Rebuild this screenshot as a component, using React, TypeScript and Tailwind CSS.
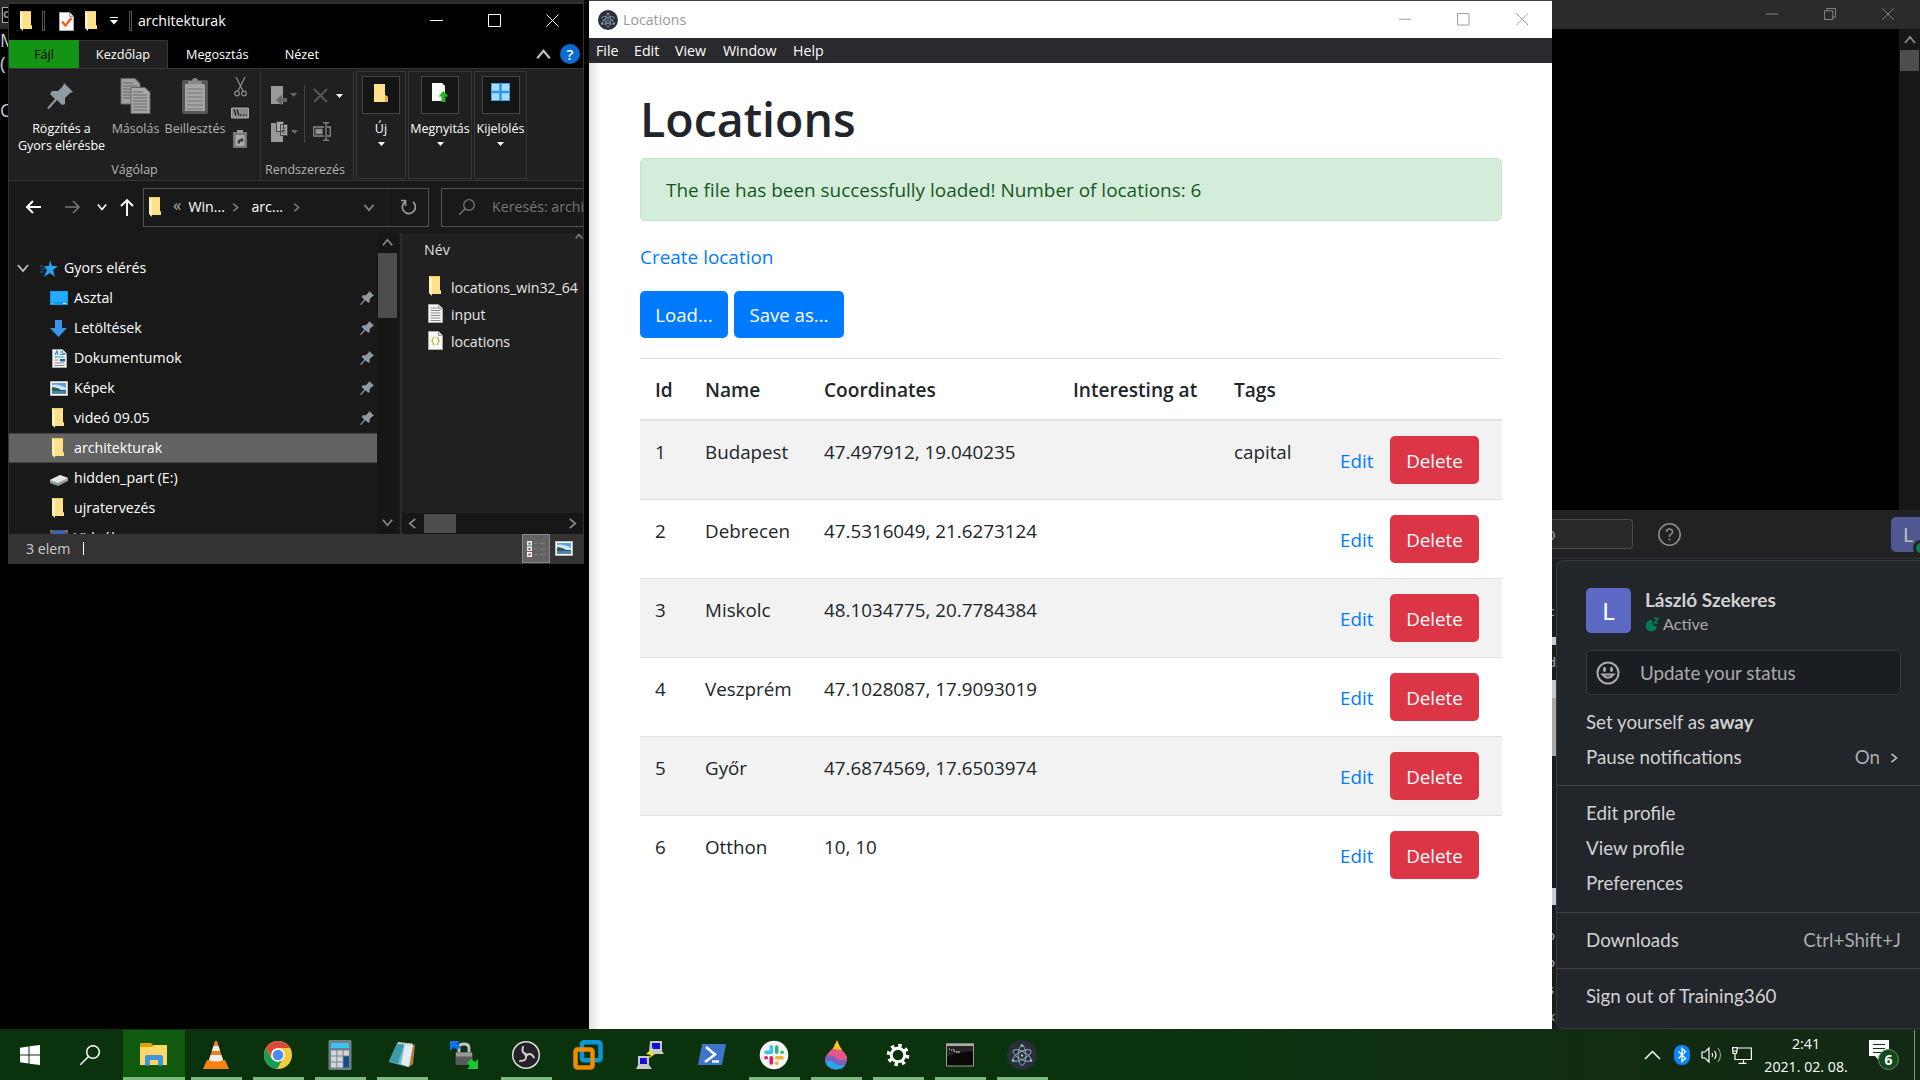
import React from 'react';

type Kids = { children?: React.ReactNode };

function Folder({ className = 'w-[14px] h-5' }: { className?: string }) {
  return (
    <svg className={className + ' shrink-0'} viewBox="0 0 14 20">
      <path d="M1 0h11v14l1 1v3H3L1 17z" fill="#f5c95f" />
      <path d="M4 1h8v13l1 1v3H4z" fill="#ffe08a" />
      <path d="M1 0l3 2v18l-3-3z" fill="#fff0b8" />
    </svg>
  );
}

function Pin({ className = 'w-[14px] h-[14px]' }: { className?: string }) {
  return (
    <svg className={className + ' shrink-0'} viewBox="0 0 26 26" fill="#8f9ba3">
      <path d="M17 0l9 9-3 1-5 5v6l-3 1-5-5-8 9-2-1 8-9-5-5 2-3h6l5-5z" />
    </svg>
  );
}

function Doc({ kind }: { kind: 'text' | 'json' | 'rich' | 'check' }) {
  return (
    <svg className="w-[15px] h-[19px] shrink-0" viewBox="0 0 15 19">
      <path d="M.5.5h10l4 4v14H.5z" fill="#f8f8f8" stroke="#aaa" />
      <path d="M10.5.5v4h4" fill="#ddd" stroke="#999" />
      {kind === 'text' && <path d="M2.5 4h7M2.5 6.5h10M2.5 9h10M2.5 11.500h10M2.500 14h10M2.500 16.500h10" stroke="#888" />}
      {kind === 'json' && <path d="M6.500 6q-1.500 0-1.500 1.500t-1.200 2.200q1.200.6 1.200 2.200t1.500 1.600M8.500 6q1.500 0 1.500 1.500t1.200 2.200q-1.200.6-1.200 2.200t-1.500 1.600" fill="none" stroke="#c0b52e" strokeWidth="1.200" />}
      {kind === 'rich' && (
        <>
          <path d="M3 6l2-4 1 4M8 3h3M8 5.500h5M2.500 8h10" stroke="#1e90dd" strokeWidth="1.200" fill="none" />
          <path d="M2.500 11h4M2.500 14h10M2.500 16.500h10" stroke="#888" />
          <path d="M8 10h5v2.500H8z" fill="#2c5f8c" />
        </>
      )}
      {kind === 'check' && <path d="M3 9.500l3.500 4L12.500 6" fill="none" stroke="#ef5a1a" strokeWidth="2.200" />}
    </svg>
  );
}

function Picture() {
  return (
    <svg className="w-[18px] h-[15px] shrink-0" viewBox="0 0 18 15">
      <path d="M.5.5h17v14H.5z" fill="#fff" stroke="#bbb" />
      <path d="M2 2h14v11H2z" fill="#5d9fe0" />
      <path d="M2 4q5-2 14 3v2H2z" fill="#cfe6f7" />
      <path d="M2 6q7 1 9 3h5v2H2z" fill="#2f5c50" />
      <path d="M2 10h14v3H2z" fill="#4a86b0" />
    </svg>
  );
}

function Drive() {
  return (
    <svg className="w-[18px] h-[12px] shrink-0" viewBox="0 0 18 12">
      <path d="M0 6l10-5 8 3v3l-10 5-8-3z" fill="#9a9a9a" />
      <path d="M0 6l10-5 8 3-10 5z" fill="#e6e6e6" />
      <path d="M5 9.500l2 .6" stroke="#2fd03a" strokeWidth="1.500" />
    </svg>
  );
}

function Chevron({ dir, className }: { dir: 'up' | 'down' | 'left' | 'right'; className: string }) {
  const d = { up: 'M1 9l5-6 5 6', down: 'M1 3l5 6 5-6', left: 'M9 1L3 6l6 5', right: 'M3 1l6 5-6 5' }[dir];
  return (
    <svg className={className + ' shrink-0'} viewBox="0 0 12 12" fill="none" stroke="currentColor" strokeWidth="1.900">
      <path d={d} />
    </svg>
  );
}

function Triangle({ className = 'text-white' }: { className?: string }) {
  return (
    <svg className={className + ' h-1 w-[7px] shrink-0'} viewBox="0 0 7 4" fill="currentColor">
      <path d="M0 0h7L3.500 4z" />
    </svg>
  );
}

function WindowButtons({ className, restored = false, size = 13 }: { className: string; restored?: boolean; size?: number }) {
  const svg = { width: size, height: size };
  return (
    <div className={'flex items-center ' + className}>
      <svg {...svg} viewBox="0 0 13 13" stroke="currentColor" fill="none"><path d="M0 6.500h13" /></svg>
      <svg {...svg} viewBox="0 0 13 13" stroke="currentColor" fill="none">
        {restored ? <path d="M.5 3h9v9.500h-9zM3 3V.5h9.500V10H9.500" /> : <path d="M.5.5h12v12H.5z" />}
      </svg>
      <svg {...svg} viewBox="0 0 13 13" stroke="currentColor" fill="none"><path d="M.5.5l12 12M12.500.5l-12 12" /></svg>
    </div>
  );
}

function Electron({ className }: { className: string }) {
  return (
    <svg className={className + ' shrink-0'} viewBox="0 0 30 30">
      <circle cx="15" cy="15" r="15" fill="#2b2e3b" />
      <g fill="none" stroke="#8fb6bf" strokeWidth=".9">
        <ellipse cx="15" cy="15.500" rx="10" ry="3.800" transform="rotate(28 15 15.500)" />
        <ellipse cx="15" cy="15.500" rx="10" ry="3.800" transform="rotate(-28 15 15.500)" />
        <ellipse cx="15" cy="15.500" rx="3.800" ry="10" />
      </g>
      <g fill="#9fc6cf"><circle cx="15" cy="15.500" r="1.200" /><circle cx="15" cy="5.500" r="1.300" /><circle cx="6" cy="20.500" r="1.300" /><circle cx="24" cy="20.500" r="1.300" /></g>
    </svg>
  );
}

function CommandWindow() {
  return (
    <section className="absolute inset-x-0 top-0 h-[510px] bg-black text-[#ccc] font-['Open_Sans',sans-serif]">
      <header className="flex h-[29px] items-center justify-between bg-[#2b2b2b] pl-[2px] pr-[26px] text-[#8c8c8c]">
        <span className="h-4 w-5 border border-[#aaa] bg-black text-[12px] font-bold leading-3">c:\</span>
        <WindowButtons className="gap-[46px] -mt-[2px]" restored size={12} />
      </header>
      <div className="flex h-[481px] justify-between">
        <div className="flex w-[9px] flex-col overflow-hidden text-[18px] leading-[23px]">
          <span>M</span>
          <span className="text-[19px]">(</span>
          <span className="mt-6">C</span>
        </div>
        <div className="flex w-[21px] flex-col items-center bg-[#171717]">
          <Chevron dir="up" className="mt-[5px] h-3 w-3 text-[#8a8a8a]" />
          <i className="mt-1 h-[21px] w-[19px] bg-[#4d4d4d]" />
        </div>
      </div>
    </section>
  );
}

function SideRow({ icon, label, pinned, active }: { icon: React.ReactNode; label: string; pinned?: boolean; active?: boolean }) {
  return (
    <div className={'flex h-[30px] shrink-0 items-center pl-[41px] pr-[3px] ' + (active ? 'border-y border-[#444] bg-[#626262]' : '')}>
      <span className="flex w-[24px] items-center">{icon}</span>
      <span className="flex-1">{label}</span>
      {pinned && <Pin />}
    </div>
  );
}

function RibbonMenu({ label, width, children }: Kids & { label: string; width: string }) {
  return (
    <div className={width + ' flex h-[108px] flex-col items-center border border-[#363636] pt-[4px]'}>
      <span className="flex h-[38px] w-[38px] justify-center border border-[#454545] bg-[#151515] pt-[6px]">{children}</span>
      <span className="mt-[6px] leading-[17px]">{label}</span>
      <Triangle className="mt-[5px] text-white" />
    </div>
  );
}

function Ribbon() {
  return (
    <div className="flex h-[113px] border-y border-[#363636] bg-[#202020] pt-[2px] text-[12.500px] whitespace-nowrap">
      <div className="flex w-[252px] flex-col border-r border-[#363636]">
        <div className="flex h-[92px]">
          <div className="flex w-[97px] flex-col items-center pl-[8px] pt-[12px] text-center">
            <Pin className="mr-1 h-[26px] w-[26px]" />
            <span className="mt-[11px] leading-[17px]">Rögzítés a<br />Gyors elérésbe</span>
          </div>
          <div className="ml-[3px] flex w-[53px] flex-col items-center pt-[7px] text-[#b3b3b3]">
            <svg className="h-[36px] w-[31px]" viewBox="0 0 31 36" stroke="#666">
              <path d="M1 .5h14l5 5V26H1z" fill="#a0a0a0" />
              <path d="M3 5h10M3 8h14M3 11h14M3 14h14M3 17h14M3 20h14" />
              <path d="M11 9.500h14l5 5v21H11z" fill="#a8a8a8" />
              <path d="M13 14h10M13 17h14M13 20h14M13 23h14M13 26h14M13 29h14M13 32h14" />
            </svg>
            <span className="mt-[6px] leading-[17px]">Másolás</span>
          </div>
          <div className="flex w-[65px] flex-col items-center pl-px pt-[7px] text-[#b3b3b3]">
            <svg className="h-[36px] w-[26px]" viewBox="0 0 26 36">
              <rect y="2" width="26" height="34" rx="2" fill="#555" />
              <path d="M3 6h20v27H3z" fill="#a5a5a5" />
              <path d="M6 6V3h4q0-3 3-3t3 3h4v3z" fill="#888" />
              <path d="M5 11h16M5 15h16M5 19h16M5 23h16M5 27h16M5 31h16" stroke="#777" />
            </svg>
            <span className="mt-[6px] leading-[17px]">Beillesztés</span>
          </div>
          <div className="flex flex-1 flex-col items-center pr-[7px] pt-[6px]">
            <svg className="h-5 w-[13px]" viewBox="0 0 13 20" fill="none" stroke="#888" strokeWidth="1.300">
              <path d="M2 0l7 14M11 0L4 14" /><circle cx="3" cy="16.500" r="2.300" /><circle cx="10" cy="16.500" r="2.300" />
            </svg>
            <svg className="mt-[10px] h-[12px] w-[18px]" viewBox="0 0 18 11">
              <path d="M.5.5h17v10H.5z" fill="#8b8b8b" stroke="#aaa" /><path d="M3 2l2 6M6 2l2 6M9 7.500h1.500M12 7.500h1.500M15 7.500h1" stroke="#222" strokeWidth="1.300" />
            </svg>
            <svg className="mt-[11px] h-[18px] w-[14px]" viewBox="0 0 14 18">
              <path d="M0 2h14v16H0z" fill="#777" /><path d="M4 0h6v3H4z" fill="#999" /><path d="M2.500 5h9v11h-9z" fill="#aaa" /><path d="M4.500 13q0-4 4-4V7l2 3-2 3v-2q-2 0-2 3z" fill="#333" />
            </svg>
          </div>
        </div>
        <span className="text-center text-[#b3b3b3]">Vágólap</span>
      </div>
      <div className="flex w-[93px] flex-col items-center border-r border-[#363636]">
        <div className="flex h-[92px] w-full pl-[10px] pt-[14px]">
          <div className="mb-[18px] flex w-[34px] flex-col gap-[16px] border-r border-[#444]">
            <div className="flex items-center gap-[3px]">
              <svg className="h-5 w-4" viewBox="0 0 16 20"><path d="M0 1h12v18H0z" fill="#999" /><path d="M16 13h-5V9.500L5 15l6 5.500V17h5z" fill="#666" /></svg>
              <Triangle className="text-[#666]" />
            </div>
            <div className="flex items-center gap-[3px]">
              <svg className="h-[21px] w-[17px]" viewBox="0 0 17 21"><path d="M0 2h12v19H0z" fill="#999" /><path d="M5.500.5h7v10h-7zM9.500 3.500h7v11h-7z" fill="#aaa" stroke="#444" /><path d="M11 7h4M11 9.500h4M11 12h4" stroke="#555" /></svg>
              <Triangle className="text-[#666]" />
            </div>
          </div>
          <div className="flex flex-col items-start gap-[19px] pl-[8px] pt-[3px]">
            <div className="flex items-center gap-[8px]">
              <svg className="h-[15px] w-[15px]" viewBox="0 0 15 15" stroke="#555" strokeWidth="2"><path d="M1 1l13 13M14 1L1 14" /></svg>
              <Triangle />
            </div>
            <svg className="h-[19px] w-[18px]" viewBox="0 0 18 19" fill="none" stroke="#888" strokeWidth="1.300">
              <path d="M11 5H.7v9H11M14 5h3.300v9H14M10 .7h2l1 1 1-1h2M10 18.300h2l1-1 1 1h2M13 1v17" /><path d="M3 7.500h6v4H3z" fill="#999" />
            </svg>
          </div>
        </div>
        <span className="pr-[4px] text-[#b3b3b3]">Rendszerezés</span>
      </div>
      <div className="flex gap-[2px] pl-[2px]">
        <RibbonMenu label="Új" width="w-[50px]">
          <svg className="h-[20px] w-[14px]" viewBox="0 0 14 18"><path d="M0 0h11v11l3 2v5H0z" fill="#ffe08a" /><path d="M11 11l3 2v5h-3z" fill="#e8b63f" /></svg>
        </RibbonMenu>
        <RibbonMenu label="Megnyitás" width="w-[64px]">
          <svg className="h-[19px] w-[16px]" viewBox="0 0 16 19"><path d="M0 0h10l3 3v15H0z" fill="#fafafa" /><path d="M11.500 8l5 5.500h-3V19h-4v-5.500h-3z" fill="#1fb825" /></svg>
        </RibbonMenu>
        <RibbonMenu label="Kijelölés" width="w-[53px]">
          <svg className="h-[18px] w-[19px]" viewBox="0 0 19 18"><path d="M.5.5h18v17H.5z" fill="#a5dcff" stroke="#3f9ff0" /><path d="M9.500 0v18M0 9h19" stroke="#3394ee" strokeWidth="2.500" /></svg>
        </RibbonMenu>
      </div>
    </div>
  );
}

function Explorer() {
  return (
    <section className="absolute left-[8px] top-[3px] flex h-[561px] w-[576px] flex-col overflow-hidden border border-[#333] bg-[#191919] font-['Open_Sans',sans-serif] text-[14.200px] text-white">
      <header className="flex h-[36px] shrink-0 items-center bg-black pb-[2px] pl-[10px] pr-[24px]">
        <Folder />
        <i className="ml-[9px] h-5 w-[3px] border border-[#555]" />
        <span className="ml-[14px] flex"><Doc kind="check" /></span>
        <span className="ml-[10px] flex"><Folder /></span>
        <svg className="ml-[12px] h-2 w-2" viewBox="0 0 8 8" fill="#fff"><path d="M0 0h8v1H0zM0 3h8L4 7.500z" /></svg>
        <i className="ml-[11px] h-5 w-[3px] border border-[#555]" />
        <span className="ml-[6px] flex-1 tracking-[-0.04px]">architekturak</span>
        <WindowButtons className="gap-[45px] -mt-[1px]" size={13} />
      </header>
      <nav className="flex h-[28px] shrink-0 items-stretch bg-black text-[12.700px] leading-[29px]">
        <span className="w-[70px] bg-[#149414] text-center text-black">Fájl</span>
        <span className="w-[89px] border-r border-t border-[#363636] bg-[#202020] text-center leading-[27px]">Kezdőlap</span>
        <span className="ml-[18px]">Megosztás</span>
        <span className="ml-[36px] flex-1">Nézet</span>
        <Chevron dir="up" className="mr-[9px] mt-[7px] h-[15px] w-[15px] text-[#bbb]" />
        <span className="mr-[3px] mt-[4px] h-5 w-5 rounded-full bg-[#0a6bd0] text-center text-[15px] font-semibold leading-5">?</span>
      </nav>
      <Ribbon />
      <div className="flex h-[52px] shrink-0 items-center">
        <svg className="ml-[16px] h-4 w-[17px] shrink-0" viewBox="0 0 17 16" fill="none" stroke="#fff" strokeWidth="2"><path d="M16 8H2M8 2L2 8l6 6" /></svg>
        <svg className="ml-[22px] h-4 w-[17px] shrink-0" viewBox="0 0 17 16" fill="none" stroke="#777" strokeWidth="1.600"><path d="M1 8h14M9 2l6 6-6 6" /></svg>
        <Chevron dir="down" className="ml-[16px] h-[10px] w-[10px]" />
        <svg className="ml-[13px] h-[18px] w-[14px] shrink-0" viewBox="0 0 14 18" fill="none" stroke="#fff" strokeWidth="1.900"><path d="M7 18V2M1 8l6-6 6 6" /></svg>
        <div className="ml-[9px] flex h-[39px] w-[286px] shrink-0 items-center border border-[#535353] pl-[4px]">
          <Folder />
          <span className="-mt-1 ml-[11px] text-[17px] text-[#aaa]">«</span>
          <span className="ml-[7px] w-[36px]">Win...</span>
          <Chevron dir="right" className="ml-[7px] h-[9px] w-[9px] text-[#888]" />
          <span className="ml-[11px] w-[29px]">arc...</span>
          <Chevron dir="right" className="ml-[12px] h-[9px] w-[9px] text-[#888]" />
          <span className="flex-1" />
          <Chevron dir="down" className="h-[11px] w-[12px] text-[#888]" />
          <i className="ml-[12px] h-full w-px bg-[#222]" />
          <svg className="mx-[12px] h-4 w-4" viewBox="0 0 16 16" fill="none" stroke="#999" strokeWidth="1.700"><path d="M12 3a6.500 6.500 0 1 1-7.500-.5M4.500 7V1.500H0" transform="translate(1 0)" /></svg>
        </div>
        <div className="ml-[12px] flex h-[39px] w-[200px] shrink-0 items-center border border-[#535353] pl-[17px] text-[#777]">
          <svg className="h-4 w-4 shrink-0" viewBox="0 0 16 16" fill="none" stroke="#777" strokeWidth="1.300"><circle cx="10" cy="6" r="5.300" /><path d="M6 10l-6 6" /></svg>
          <span className="ml-[17px] whitespace-nowrap">Keresés: architekturak</span>
        </div>
      </div>
      <div className="flex min-h-0 flex-1">
        <div className="flex w-[368px] flex-col overflow-hidden pt-[20px]">
          <div className="flex h-[30px] shrink-0 items-center pl-[8px]">
            <Chevron dir="down" className="h-3 w-3 text-[#bbb]" />
            <svg className="ml-[11px] h-[17px] w-[18px]" viewBox="0 0 18 17"><path d="M10 0l2 6h6l-5 4 2 7-5-4-6 4 3-7-3-4h5z" fill="#27a3f5" /><path d="M0 6h3M1 9h4M0 12h4" stroke="#1b6fb0" /></svg>
            <span className="ml-[6px]">Gyors elérés</span>
          </div>
          <SideRow icon={<svg className="h-[14px] w-[18px]" viewBox="0 0 18 14"><path d="M0 0h18v14H0z" fill="#0f9bf0" /><path d="M1 1h16v10H1z" fill="#25aaff" /><path d="M2 12.500h1M13 12.500h3" stroke="#fff" /></svg>} label="Asztal" pinned />
          <SideRow icon={<svg className="h-[17px] w-[17px]" viewBox="0 0 17 17"><path d="M5 0h7v8h5l-8.500 9L0 8h5z" fill="#3a96e8" /></svg>} label="Letöltések" pinned />
          <SideRow icon={<span className="ml-[2px] flex"><Doc kind="rich" /></span>} label="Dokumentumok" pinned />
          <SideRow icon={<Picture />} label="Képek" pinned />
          <SideRow icon={<span className="ml-px flex"><Folder /></span>} label="videó 09.05" pinned />
          <SideRow icon={<span className="ml-px flex"><Folder /></span>} label="architekturak" active />
          <SideRow icon={<span className="mt-1 flex"><Drive /></span>} label="hidden_part (E:)" />
          <SideRow icon={<span className="ml-px flex"><Folder /></span>} label="ujratervezés" />
          <SideRow icon={<svg className="h-[16px] w-[18px]" viewBox="0 0 18 16"><path d="M0 0h18v16H0z" fill="#555" /><path d="M3 1h12v14H3z" fill="#3566c8" /><path d="M8 4h5v6H8z" fill="#e5b52e" /><path d="M1.500 0v16M16.500 0v16" stroke="#999" strokeDasharray="2 2" /></svg>} label="Videók" />
        </div>
        <div className="flex w-[21px] flex-col items-center justify-between bg-[#161616] pb-[6px] pt-[4px] text-[#888]">
          <div className="flex flex-col items-center">
            <Chevron dir="up" className="h-[11px] w-[11px]" />
            <i className="mt-[5px] h-[65px] w-[19px] bg-[#4d4d4d]" />
          </div>
          <Chevron dir="down" className="h-[11px] w-[11px]" />
        </div>
        <div className="ml-[2px] flex min-w-0 flex-1 flex-col border-l-2 border-[#2b2b2b] bg-[#202020]">
          <div className="flex h-[41px] justify-between pl-[22px]">
            <span className="pt-[6px] text-[#dedede]">Név</span>
            <Chevron dir="up" className="mt-[-1px] h-[9px] w-[8px] text-[#888]" />
          </div>
          {[
            { i: <Folder />, l: 'locations_win32_64' },
            { i: <Doc kind="text" />, l: 'input' },
            { i: <Doc kind="json" />, l: 'locations' },
          ].map((f) => (
            <div key={f.l} className="flex h-[27px] items-center whitespace-nowrap pl-[26px]">
              <span className="flex w-[23px] pb-[3px]">{f.i}</span>
              <span className="text-[#e6e6e6] tracking-[-0.04px]">{f.l}</span>
            </div>
          ))}
          <span className="flex-1" />
          <div className="flex h-[21px] items-center bg-[#171717] pb-px text-[#888]">
            <Chevron dir="left" className="ml-[5px] h-[11px] w-[11px]" />
            <i className="ml-[6px] h-[19px] w-[32px] bg-[#4d4d4d]" />
            <span className="flex-1" />
            <Chevron dir="right" className="mr-[5px] h-[11px] w-[11px]" />
          </div>
        </div>
      </div>
      <footer className="flex h-[29px] shrink-0 items-center bg-[#333] pl-[17px] text-[#ccc]">
        <span className="w-[57px]">3 elem</span>
        <i className="h-[13px] w-px bg-white" />
        <span className="flex-1" />
        <span className="flex h-[29px] w-[28px] items-center justify-center border border-[#8a8a8a] bg-[#626262]">
          <svg className="h-4 w-[18px]" viewBox="0 0 18 16"><path d="M0 0h5v4.500H0zM0 5.500h5V10H0zM0 11h5v5H0z" fill="#f4f4f4" /><path d="M1.500 1.500h2v2h-2z" fill="#367" /><path d="M1.500 7h2v2h-2z" fill="#556" /><path d="M1.500 12.500h2v2h-2z" fill="#b22" /><path d="M7 2.500h4M13 2.500h5M7 8h4M13 8h5M7 13.500h4M13 13.500h5" stroke="#7d7d7d" /></svg>
        </span>
        <span className="ml-[5px] mr-[10px] flex"><Picture /></span>
      </footer>
    </section>
  );
}

const rows = [
  ['1', 'Budapest', '47.497912, 19.040235', 'capital'],
  ['2', 'Debrecen', '47.5316049, 21.6273124', ''],
  ['3', 'Miskolc', '48.1034775, 20.7784384', ''],
  ['4', 'Veszprém', '47.1028087, 17.9093019', ''],
  ['5', 'Győr', '47.6874569, 17.6503974', ''],
  ['6', 'Otthon', '10, 10', ''],
];
const columns = 'grid grid-cols-[50px_119px_249px_161px_91px_1fr] pl-[15px]';

function LocationsWindow() {
  return (
    <section className="absolute left-[589px] top-0 flex h-[1029px] w-[963px] flex-col border-t border-[#444] bg-white font-['Open_Sans',sans-serif] text-[18.950px] leading-[30px] text-[#212529]">
      <header className="flex h-[37px] shrink-0 items-center pl-[9px] pr-[24px]">
        <Electron className="h-5 w-5" />
        <span className="ml-[5px] flex-1 text-[14.200px] text-[#999]">Locations</span>
        <WindowButtons className="gap-[46px] text-[#999]" size={12.500} />
      </header>
      <nav className="flex h-[25px] shrink-0 items-center bg-[#292a2d] pl-[7px] text-[14.200px] text-white">
        <span className="w-[38px]">File</span><span className="w-[41px]">Edit</span><span className="w-[48px]">View</span><span className="w-[70px]">Window</span><span>Help</span>
      </nav>
      <main className="flex flex-1 flex-col bg-linear-to-r from-[#e2e2e2] to-white to-[12px] pl-[51px] pr-[50px] pt-[26px]">
        <h1 className="h-[69px] text-[46.500px] font-semibold leading-[60px]">Locations</h1>
        <div className="flex h-[63px] items-center rounded-[5px] border border-[#c3e6cb] bg-[#d4edda] pl-[25px] text-[#155724]">
          The file has been successfully loaded! Number of locations: 6
        </div>
        <a className="mt-[21px] text-[#007bff]">Create location</a>
        <div className="mt-[19px] flex gap-[6px] text-[18.600px] text-white">
          <button className="h-[47px] w-[88px] rounded-[5px] bg-[#007bff]">Load...</button>
          <button className="h-[47px] w-[110px] rounded-[5px] bg-[#007bff]">Save as...</button>
        </div>
        <div className={columns + ' mt-[20px] h-[63px] items-center border-b-2 border-t border-[#dee2e6] pt-[2px] text-[19.100px] font-semibold'}>
          <span>Id</span><span>Name</span><span>Coordinates</span><span>Interesting at</span><span>Tags</span>
        </div>
        {rows.map((r, i) => (
          <div key={r[0]} className={columns + (i % 2 ? ' bg-white' : ' bg-[#f2f2f2]') + (i ? ' h-[79px] border-t border-[#dee2e6]' : ' h-[78px]') + ' pt-[16px] text-[18.800px]'}>
            <span>{r[0]}</span><span>{r[1]}</span><span>{r[2]}</span><span /><span>{r[3]}</span>
            <div className="-mt-px flex h-[48px] items-center pl-[15px]">
              <a className="w-[50px] pt-px text-[#007bff]">Edit</a>
              <button className="h-[48px] w-[89px] rounded-[5px] bg-[#dc3545] pt-px text-white">Delete</button>
            </div>
          </div>
        ))}
      </main>
    </section>
  );
}

function MenuItem({ children, className = 'h-[35px]' }: Kids & { className?: string }) {
  return <div className={'flex items-center ' + className}>{children}</div>;
}

function Slack() {
  return (
    <section className="absolute left-[1552px] top-[510px] flex h-[519px] w-[368px] flex-col overflow-hidden bg-[#1a1d21] font-['Lato',sans-serif] text-[18.750px] text-[#d1d2d3]">
      <header className="flex h-[49px] shrink-0 items-center border-b border-[#333] bg-[#222124]">
        <span className="flex h-[30px] w-[81px] items-center rounded-r-[4px] border border-l-0 border-[#4a4a4a] bg-[#28282a]"><span className="-ml-[6px] text-[17px] text-[#8a8a8a]">p</span></span>
        <svg className="ml-[25px] h-[23px] w-[23px]" viewBox="0 0 23 23" fill="none" stroke="#8f8f8f" strokeWidth="1.500"><circle cx="11.500" cy="11.500" r="10.700" /><path d="M8.500 9q0-3 3-3t3 3q0 1.500-1.700 2.300T11.500 14" /><path d="M11.500 15.800v1.600" strokeWidth="1.700" /></svg>
        <span className="relative ml-auto flex h-[35px] w-[29px] items-center rounded-l-[5px] bg-[#4f5891] pl-[12px] text-[20px] text-[#bbb]">L
          <i className="absolute -right-[9px] bottom-[-4px] h-4 w-4 rounded-full border-[3px] border-[#222124] bg-[#0b8058]" />
        </span>
      </header>
      <div className="flex min-h-0 flex-1">
        <div className="flex w-[4px] shrink-0 flex-col overflow-hidden text-[14px] leading-4 text-[#aaa]">
          <span className="-ml-1 mt-[44px]">c</span>
          <i className="mt-[18px] h-[8px] shrink-0 bg-[#ccc]" />
          <span className="-ml-1 mt-[9px]">d</span>
          <i className="mt-[10px] h-[18px] shrink-0 bg-[#c8c8c8]" />
          <i className="h-[58px] shrink-0 bg-[#a8a8a8]" />
          <i className="mt-[132px] h-[17px] shrink-0 bg-[#ccc]" />
          <span className="-ml-[5px] mt-[22px]">o</span>
          <span className="-ml-[5px] mt-[11px]">o</span>
          <span className="-ml-[4px] mt-[11px]">s</span>
          <span className="-ml-[4px] mt-[11px]">k</span>
        </div>
        <div className="mt-px flex flex-1 flex-col rounded-l-[8px] border border-r-0 border-[#36393d] bg-[#222529]">
          <div className="flex h-[225px] shrink-0 flex-col border-b border-[#3f4246] pl-[29px] pr-[19px] pt-[27px]">
            <div className="flex h-[45px]">
              <span className="flex h-[45px] w-[45px] items-center justify-center rounded-[5px] bg-[#5c6ac4] text-[24px] text-white">L</span>
              <div className="ml-[14px] flex flex-col">
                <span className="text-[19px] font-bold leading-[23px]">László Szekeres</span>
                <span className="flex items-center text-[16.250px] leading-[26px] text-[#ababad]">
                  <svg className="mr-[3px] h-[15px] w-[15px]" viewBox="0 0 15 15"><path d="M7 3a5.700 5.700 0 1 0 5 6.500Q7 10 7 3z" fill="#007a5a" /><path d="M9 1.200h4L9.500 6H13.500" fill="none" stroke="#007a5a" strokeWidth="1.600" /></svg>
                  Active
                </span>
              </div>
            </div>
            <div className="mt-[17px] flex h-[45px] items-center rounded-[5px] border border-[#36393d] bg-[#1a1d21] pl-[9px] text-[#ababad]">
              <svg className="h-[24px] w-[24px]" viewBox="0 0 24 24" fill="none" stroke="#ababad" strokeWidth="2"><circle cx="12" cy="12" r="10.500" /><path d="M6.500 13.500q5.500 6.500 11 0z" /><path d="M8.500 7.500v2M15.500 7.500v2" strokeWidth="2.800" strokeLinecap="round" /></svg>
              <span className="ml-[20px] pt-px">Update your status</span>
            </div>
            <div className="mt-[10px]">
              <MenuItem><span>Set yourself as <b>away</b></span></MenuItem>
              <MenuItem>
                <span className="flex-1">Pause notifications</span>
                <span className="text-[#ababad]">On</span>
                <Chevron dir="right" className="ml-[9px] mr-[2px] h-[10px] w-[10px] text-[#c0c0c0]" />
              </MenuItem>
            </div>
          </div>
          <div className="flex h-[127px] shrink-0 flex-col border-b border-[#3f4246] pl-[29px] pt-[10px]">
            <MenuItem>Edit profile</MenuItem><MenuItem>View profile</MenuItem><MenuItem>Preferences</MenuItem>
          </div>
          <div className="flex h-[56px] shrink-0 items-center justify-between border-b border-[#3f4246] pl-[29px] pr-[19px]">
            <span>Downloads</span><span className="text-[#ababad]">Ctrl+Shift+J</span>
          </div>
          <MenuItem className="h-[55px] pl-[29px]">Sign out of Training360</MenuItem>
        </div>
      </div>
    </section>
  );
}

function Task({ children, open, active }: Kids & { open?: boolean; active?: boolean }) {
  return (
    <div className={'flex h-[50px] w-[62px] shrink-0 flex-col items-center justify-between ' + (active ? 'bg-[#105a10]' : '')}>
      <span className="flex h-[47px] items-center pt-[2px]">{children}</span>
      {open && <i className={'h-[3px] bg-[#7cb97c] ' + (active ? 'w-full' : 'w-[51px]')} />}
    </div>
  );
}

const big = 'h-[30px] w-[30px]';

function Taskbar() {
  return (
    <footer className="absolute inset-x-0 top-[1029px] flex h-[51px] items-center border-t border-[#1a2a1a] bg-linear-to-r from-[#0a330d] from-60% to-[#132815] font-['Open_Sans',sans-serif] text-white">
      <svg className="ml-[20px] h-5 w-5" viewBox="0 0 20 20" fill="#fff"><path d="M0 2.700l8.500-1.200v8H0zM9.500 1.300L20 0v9.500H9.500zM0 10.500h8.500v8L0 17.300zM9.500 10.500H20V20L9.500 18.700z" /></svg>
      <svg className="ml-[40px] mr-[23px] h-5 w-5" viewBox="0 0 20 20" fill="none" stroke="#fff" strokeWidth="1.500"><circle cx="13" cy="7" r="6.300" /><path d="M8.500 11.500L0 20" /></svg>
      <Task open active>
        <svg className={big} viewBox="0 0 30 30"><path d="M1 4q0-1 1-1h10l2 2v5H1z" fill="#e2a10a" /><path d="M1 7h12l2-2h13v20H1z" fill="#ffd766" /><path d="M6 25.500V17q0-2 2-2h14q2 0 2 2v8.500h-5V20h-8v5.500z" fill="#3d96dd" /></svg>
      </Task>
      <Task open>
        <svg className={big} viewBox="0 0 30 30"><path d="M6 20h18l4 9H2z" fill="#f58410" /><path d="M14 1h2l7 22q-8 4-16 0z" fill="#f5801a" /><path d="M12.500 6h5l1.500 5h-8zM9.500 15h11l1.500 5q-7 3-14 0z" fill="#eee" /></svg>
      </Task>
      <Task open>
        <svg className={big} viewBox="0 0 30 30"><circle cx="15" cy="15" r="14" fill="#f7ca3e" /><path d="M2.900 8A14 14 0 0 1 27.100 8H15a7 7 0 0 0-6.500 9.500z" fill="#db4a3c" /><path d="M2.900 8A14 14 0 0 0 14 29l6-10.500a7 7 0 0 1-11.500 0z" fill="#159b5b" /><circle cx="15" cy="15" r="6.800" fill="#fff" /><circle cx="15" cy="15" r="5.300" fill="#4a8af4" /></svg>
      </Task>
      <Task open>
        <svg className={big} viewBox="0 0 30 30"><rect x="3.500" width="23" height="30" rx="1.500" fill="#747f8c" /><path d="M6 3h18v5H6z" fill="#35c6f2" /><path d="M6 10.500h5.400v5H6zM12.300 10.500h5.400v5h-5.400zM18.600 10.500H24v5h-5.400zM6 16.500h5.400v5H6zM12.300 16.500h5.400v5h-5.400zM6 22.500h5.400v5H6zM12.300 22.500h5.400v5h-5.400z" fill="#d0d6da" /><path d="M18.600 16.500H24v11h-5.400z" fill="#124a8a" /></svg>
      </Task>
      <Task open>
        <svg className={big} viewBox="0 0 30 30"><path d="M25 4l3 1-2 19-4 3z" fill="#b9783c" /><path d="M11 2l15 2-5 23-19-5z" fill="#76bccb" /><path d="M18 4l8 1-4 22-8-3z" fill="#dfeef2" /><path d="M10 3l7 1-6 20-9-3z" fill="#3f98a8" /><path d="M11 3l15 1.500" stroke="#ddd" strokeWidth="2" strokeDasharray="1.500 1" /></svg>
      </Task>
      <Task>
        <svg className={big} viewBox="0 0 30 30"><path d="M10 14V8q0-4 5-4t5 4v6" fill="none" stroke="#c4c4c4" strokeWidth="2.800" /><rect x="6.500" y="12" width="17" height="13" rx="2" fill="#5a5a5a" /><path d="M7 12.500h16v4H7z" fill="#9a9a9a" /><path d="M1 1h10L8 4l4 3-4 3-3-3-4 4z" fill="#1470f0" /><path d="M29 29H18l3-3-3-3 4-4 4 3 3-3z" fill="#19c833" /></svg>
      </Task>
      <Task open>
        <svg className={big} viewBox="0 0 30 30"><circle cx="15" cy="15" r="13.300" fill="#242226" stroke="#ddd" strokeWidth="1.500" /><g fill="none" stroke="#ccc" strokeWidth="2" strokeLinecap="round"><path d="M15 14q-5-1-3-7" /><path d="M16 15q4-3 7 2" transform="rotate(3 15 15)" /><path d="M15 16q1 5-6 5" /></g><circle cx="15" cy="15" r="1.800" fill="#ccc" /></svg>
      </Task>
      <Task>
        <svg className={big} viewBox="0 0 30 30" fill="none" strokeWidth="4.500"><rect x="9" y="2.300" width="18.500" height="18" rx="2" stroke="#0c95d6" /><rect x="2.500" y="9.500" width="17" height="18" rx="2" stroke="#f38b00" /></svg>
      </Task>
      <Task>
        <svg className={big} viewBox="0 0 30 30"><path d="M15 1h12v10l2 3H16l-2-2z" fill="#c9c9c9" /><path d="M17 3h8v6h-8z" fill="#1010d8" /><path d="M3 16h11v9l3 4H1l2-4z" fill="#c9c9c9" /><path d="M5 18h7v6H5z" fill="#1010d8" /><path d="M19 7l-8 7 5 1-6 6 10-7-5-1z" fill="#f2ea1c" /></svg>
      </Task>
      <Task>
        <svg className={big} viewBox="0 0 30 30"><path d="M5 4h24l-4 21H1z" fill="#3f74cc" /><path d="M9 7l9 7.500L8 22" fill="none" stroke="#fff" strokeWidth="2.600" /><path d="M15 21.500h7" stroke="#fff" strokeWidth="2.300" /></svg>
      </Task>
      <Task open>
        <svg className={big} viewBox="0 0 30 30"><circle cx="15" cy="15" r="14.300" fill="#f4f4f4" /><g strokeWidth="3.600" strokeLinecap="round"><path d="M12.300 6.800v5.500M7 12.300h5.300" stroke="#36c5f0" /><path d="M17.700 7v5.300M23 12.300h.2" stroke="#2eb67d" /><path d="M17.700 17.700h5.300M17.700 23v.2" stroke="#ecb22e" /><path d="M12.300 17.700V23M7 17.700h.2" stroke="#e01e5a" /></g></svg>
      </Task>
      <Task open>
        <svg className={big} viewBox="0 0 30 30"><path d="M16 0q2 7 6 11 5 5 4 9-2 9-11 9.500Q5 29 4 20q0-4 5-9 6-5 7-11z" fill="#e5568b" /><path d="M14 4q2-2 2-4 2 6 5 10l-9-1q1-2 2-5z" fill="#ffc918" /><path d="M5 16q6-2 10 2t11 1q0 5-4 7L6 25q-3-4-1-9z" fill="#7c5fc0" /><path d="M4.500 21q6-1 9 2t11 2q-3 4.500-10 4.500-8-.5-10-8.500z" fill="#22a7e8" /></svg>
      </Task>
      <Task open>
        <svg className={big} viewBox="0 0 30 30" fill="none" stroke="#fff"><circle cx="15" cy="15" r="6.800" strokeWidth="3" /><circle cx="15" cy="15" r="9.500" strokeWidth="3.500" strokeDasharray="3.400 4.060" /></svg>
      </Task>
      <Task open>
        <svg className={big} viewBox="0 0 30 30"><path d="M1.500 4h27v22h-27z" fill="#080808" stroke="#9a9a9a" /><path d="M1 3.500h28V6H1z" fill="#aaa" /><path d="M4 9h1M6 10h1M8 9l2 3M11 12h4" stroke="#ccc" /><path d="M2 17q5-4 26-6V6H2z" fill="#fff" opacity=".12" /></svg>
      </Task>
      <Task open><Electron className={big} /></Task>
      <div className="ml-auto flex h-full items-center">
        <svg className="h-[10px] w-[17px]" viewBox="0 0 17 10" fill="none" stroke="#fff" strokeWidth="1.500"><path d="M1 9l7.500-7.500L16 9" /></svg>
        <svg className="ml-[13px] h-5 w-4" viewBox="0 0 16 20"><rect width="16" height="20" rx="7.500" fill="#0a84ff" /><path d="M4.500 6.500l7 7L8 16.500v-13l3.500 3-7 7" fill="none" stroke="#fff" strokeWidth="1.300" /></svg>
        <svg className="ml-[11px] h-5 w-[21px]" viewBox="0 0 21 20" fill="none" stroke="#fff" strokeWidth="1.200"><path d="M1 7h3l4-4v14l-4-4H1zM11 8q1.500 2 0 4M13.500 6q3 4 0 8" /><path d="M17 3q5 7 0 14" stroke="#8a9a8a" /></svg>
        <svg className="ml-[10px] h-5 w-5" viewBox="0 0 20 20" fill="none" stroke="#fff" strokeWidth="1.200"><path d="M5 3h14.400v11.500H3V9M11.500 14.500V18M6.500 18.300h8M.6 2.600h4.500V6H.6zM1 6v2.500h3.500V6" /></svg>
        <div className="ml-[9px] flex w-[90px] flex-col items-center whitespace-nowrap text-[14.200px] leading-[23px]">
          <span>2:41</span><span>2021. 02. 08.</span>
        </div>
        <span className="relative ml-[18px] h-[30px] w-[32px]">
          <svg className="h-[20px] w-5" viewBox="0 0 20 20"><path d="M0 0h20v16h-8l-3 3.500-3-3.500H0z" fill="#fff" /><path d="M4 4.500h12M4 8.500h12M4 12.500h8" stroke="#123615" strokeWidth="1.200" /></svg>
          <b className="absolute left-[9px] top-[9px] h-[21px] w-[21px] rounded-full border border-[#5f8f60] bg-[#14491a] text-center text-[14px] leading-[19px]">6</b>
        </span>
        <i className="ml-[13px] mr-[5px] h-full w-px bg-[#8a978a]" />
      </div>
    </footer>
  );
}

export default function App() {
  return (
    <div className="relative h-[1080px] w-[1920px] overflow-hidden bg-black">
      <CommandWindow />
      <Slack />
      <LocationsWindow />
      <i className="absolute left-[584px] top-0 h-[570px] w-[5px] bg-black" />
      <Explorer />
      <Taskbar />
    </div>
  );
}
